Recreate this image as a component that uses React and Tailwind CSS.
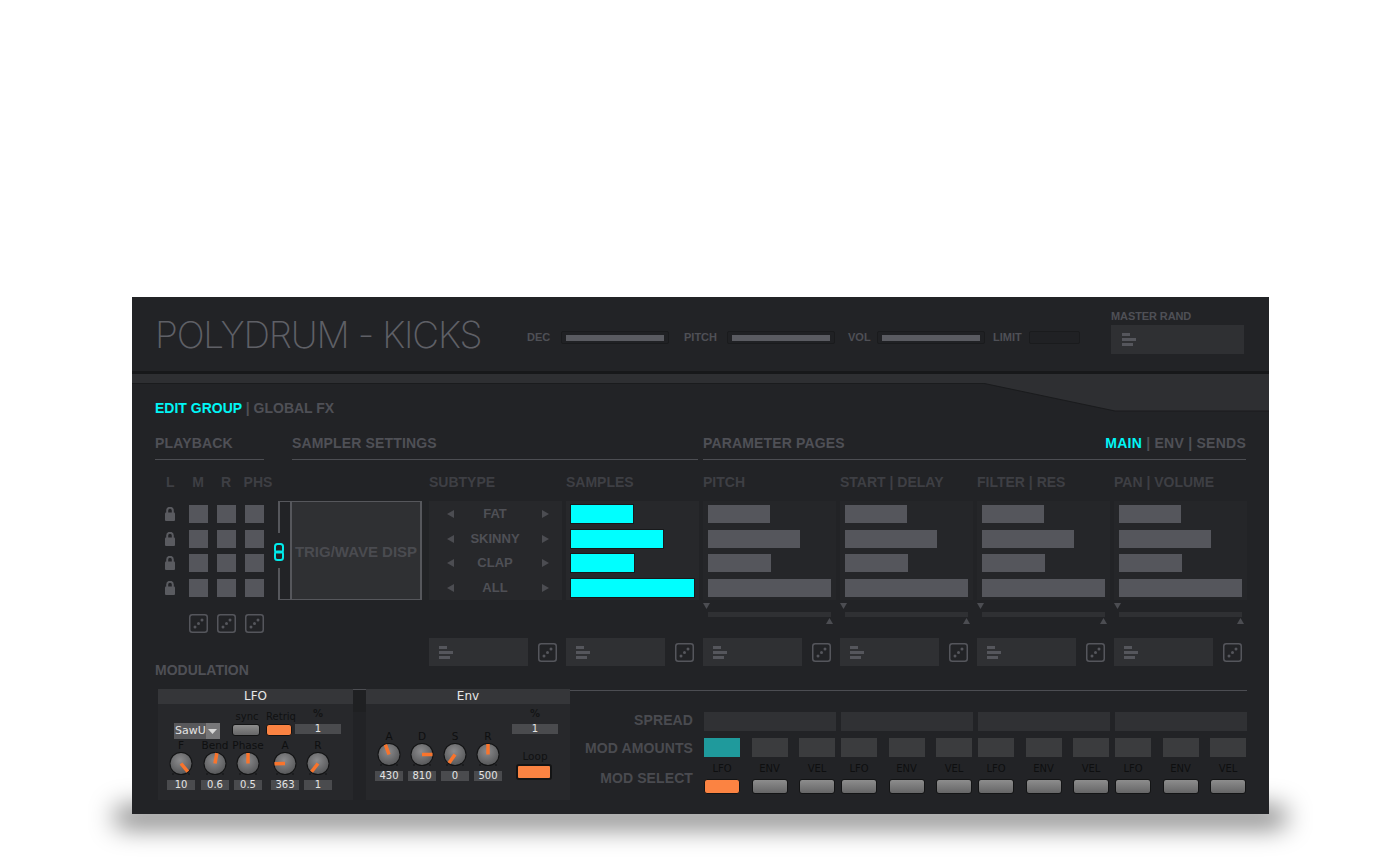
import React from "react";

const bold = "font-['Liberation_Sans',sans-serif] font-bold";
const small = "font-['DejaVu_Sans',sans-serif]";

const Tri = ({ dir, className }) => {
  const pts = {
    up: "3.5,0 7,6 0,6",
    down: "0,0 7,0 3.5,6",
    left: "7,0 7,8 0,4",
    right: "0,0 7,4 0,8",
  };
  const horizontal = dir === "left" || dir === "right";
  return (
    <svg
      width="7"
      height={horizontal ? 8 : 6}
      className={"block shrink-0 " + (className || "")}
    >
      <polygon points={pts[dir]} fill="#4c4d52" />
    </svg>
  );
};

const Dice = ({ className }) => (
  <svg width="19" height="19" className={"block shrink-0 " + (className || "")}>
    <rect x="0.75" y="0.75" width="17.5" height="17.5" rx="2.5" fill="none" stroke="#55565c" strokeWidth="1.5" />
    <circle cx="6" cy="13" r="1.5" fill="#55565c" />
    <circle cx="9.5" cy="9.5" r="1.5" fill="#55565c" />
    <circle cx="13" cy="6" r="1.5" fill="#55565c" />
  </svg>
);

const Rand = ({ className }) => (
  <div className={"flex flex-col gap-[2px] " + (className || "")}>
    <div className="h-[3px] w-[8px] bg-[#55565c]" />
    <div className="h-[3px] w-[14px] bg-[#55565c]" />
    <div className="h-[3px] w-[11px] bg-[#55565c]" />
  </div>
);

const RandRow = () => (
  <div className="flex items-center">
    <div className="flex h-[28px] w-[99px] items-center bg-[#2f3033] pl-[10px]">
      <Rand />
    </div>
    <Dice className="ml-[10px]" />
  </div>
);

const Lock = () => (
  <svg width="10" height="14" className="block">
    <path d="M2.2 6V3.6a2.8 2.8 0 0 1 5.6 0V6" fill="none" stroke="#5a5b60" strokeWidth="2" />
    <rect x="0" y="5.5" width="10" height="8.5" rx="1" fill="#5a5b60" />
  </svg>
);

const Link = () => (
  <svg width="10" height="18" className="block">
    <rect x="1" y="1" width="8" height="8.5" rx="2.5" fill="none" stroke="#00ecec" strokeWidth="2" />
    <rect x="1" y="8.5" width="8" height="8.5" rx="2.5" fill="none" stroke="#00ecec" strokeWidth="2" />
  </svg>
);

const Slot = ({ w, fill = true }) => (
  <div className={"flex h-[13px] items-center rounded-[2px] border border-[#1a1b1d] bg-[#202124] px-[4px] " + w}>
    {fill && <div className="h-[6px] w-full bg-[#5a5b61]" />}
  </div>
);

const Col = ({ label, children }) => (
  <div className="w-[133px] shrink-0">
    <div className={bold + " h-[41px] pt-[14px] text-[14px] leading-[16px] text-[#3e3f44]"}>{label}</div>
    {children}
  </div>
);

const ParamCol = ({ label, widths, cyan }) => (
  <Col label={label}>
    <div className={"flex h-[99px] flex-col gap-[6.6px] pl-[5px] pt-[4px] " + (cyan ? "bg-[#27282b]" : "bg-[#252629]")}>
      {widths.map((w, i) => (
        <div
          key={i}
          className={"h-[18px] " + (cyan ? "bg-[#00ffff] outline outline-1 outline-[#18191b]" : "bg-[#55565c]")}
          style={{ width: w }}
        />
      ))}
    </div>
    <div className="h-[38px]">
      {!cyan && (
        <>
          <Tri dir="down" className="translate-y-[3px]" />
          <div className="ml-[5px] mt-[6px] h-[5px] w-[123px] bg-[#2f3033]" />
          <Tri dir="up" className="ml-[123px] mt-[1px]" />
        </>
      )}
    </div>
    <RandRow />
  </Col>
);

const Knob = ({ id, angle }) => (
  <svg width="28" height="26" className="block">
    <defs>
      <radialGradient id={id} cx="45%" cy="35%" r="70%">
        <stop offset="0%" stopColor="#8b8b8d" />
        <stop offset="100%" stopColor="#545557" />
      </radialGradient>
    </defs>
    <circle cx="6" cy="23" r="0.8" fill="#111" />
    <circle cx="22" cy="23" r="0.8" fill="#111" />
    <circle cx="14" cy="12.5" r="11.5" fill="#121314" />
    <circle cx="14" cy="12.5" r="10.5" fill={`url(#${id})`} />
    <line
      x1="14"
      y1="12.5"
      x2="14"
      y2="2"
      stroke="#f9742c"
      strokeWidth="3.5"
      transform={`rotate(${angle} 14 12.5)`}
    />
  </svg>
);

const KnobCol = ({ id, label, value, angle, className }) => (
  <div className={"flex w-[28px] flex-col items-center " + (className || "")}>
    <div className={small + " h-[12px] whitespace-nowrap text-[10.5px] leading-[12px] text-[#0e0f10]"}>{label}</div>
    <Knob id={id} angle={angle} />
    <div className={small + " mt-[3px] h-[10px] w-[28px] bg-[#4a4b4e] text-center text-[10px] leading-[10px] text-[#e4e4e4]"}>
      {value}
    </div>
  </div>
);

const PercentCol = ({ className }) => (
  <div className={"w-[46px] " + (className || "")}>
    <div className={small + " h-[18px] text-center text-[10px] font-bold leading-[16px] text-[#141516]"}>%</div>
    <div className={small + " h-[10px] bg-[#4a4b4e] text-center text-[10px] leading-[10px] text-[#e4e4e4]"}>1</div>
  </div>
);

const Btn = ({ on, className }) => (
  <div
    className={
      "rounded-[3px] border border-[#131415] " +
      (on ? "bg-[#fb8342] " : "bg-gradient-to-b from-[#8d8d8d] to-[#666667] ") +
      (className || "")
    }
  />
);

const PanelHead = ({ children }) => (
  <div className={small + " h-[15px] bg-[#353639] text-center text-[12px] leading-[15px] text-[#e8e8e8]"}>{children}</div>
);

const Lfo = () => (
  <div className="w-[195px] shrink-0">
    <PanelHead>LFO</PanelHead>
    <div className="h-[96px] bg-[#27282b]">
      <div className="flex h-[35px] items-start">
        <div className="ml-[16px] mt-[19px] flex h-[16px] w-[46px] bg-[#58585b]">
          <span className={small + " flex-1 pl-[1px] text-[11px] leading-[16px] text-[#e4e4e4]"}>SawU</span>
          <div className="flex w-[15px] items-center justify-center bg-[#777779]">
            <svg width="9" height="5"><polygon points="0,0 9,0 4.5,5" fill="#d8d8d8" /></svg>
          </div>
        </div>
        <div className="ml-[12px] mt-[6px] w-[30px]">
          <div className={small + " h-[14px] text-center text-[10px] leading-[14px] text-[#101112]"}>sync</div>
          <Btn className="h-[12px] w-[28px]" />
        </div>
        <div className="ml-[4px] mt-[6px] w-[30px]">
          <div className={small + " -mx-[2px] h-[14px] text-center text-[10px] leading-[14px] text-[#101112]"}>Retriq</div>
          <Btn on className="h-[12px] w-[26px]" />
        </div>
        <PercentCol className="-ml-px mt-[2px]" />
      </div>
      <div className="ml-[9px] flex">
        <KnobCol id="lf" label="F" value="10" angle={140} />
        <KnobCol id="lb" label="Bend" value="0.6" angle={10} className="ml-[6px]" />
        <KnobCol id="lp" label="Phase" value="0.5" angle={0} className="ml-[5px]" />
        <KnobCol id="la" label="A" value="363" angle={268} className="ml-[9px]" />
        <KnobCol id="lr" label="R" value="1" angle={218} className="ml-[5px]" />
      </div>
    </div>
  </div>
);

const Env = () => (
  <div className="w-[204px] shrink-0">
    <PanelHead>Env</PanelHead>
    <div className="flex h-[96px] bg-[#27282b]">
      <div className="ml-[9px] mt-[26px] flex h-fit gap-[5px]">
        <KnobCol id="ea" label="A" value="430" angle={-20} />
        <KnobCol id="ed" label="D" value="810" angle={90} />
        <KnobCol id="es" label="S" value="0" angle={215} />
        <KnobCol id="er" label="R" value="500" angle={0} />
      </div>
      <div className="ml-[10px] mt-[2px] w-[46px]">
        <PercentCol />
        <div className={small + " mt-[15px] h-[14px] text-center text-[10.5px] leading-[14px] text-[#101112]"}>Loop</div>
        <Btn on className="ml-[4px] mt-[1px] h-[16px] w-[36px] border-2" />
      </div>
    </div>
  </div>
);

const RowLabel = ({ children, className }) => (
  <div className={bold + " w-[123px] shrink-0 text-right text-[14px] tracking-[0.1px] text-[#4a4b50] whitespace-nowrap " + (className || "")}>{children}</div>
);

const groups = ["LFO", "ENV", "VEL"];

const ModRight = () => (
  <div className="mt-[1px] h-[110px] w-[677px] shrink-0 border-t border-[#4c4d52] pt-[21px]">
    <div className="flex">
      <RowLabel className="h-[19px] leading-[17px]">SPREAD</RowLabel>
      <div className="ml-[11px] flex gap-[5px]">
        {[0, 1, 2, 3].map((i) => (
          <div key={i} className="h-[19px] w-[132px] bg-[#303134]" />
        ))}
      </div>
    </div>
    <div className="mt-[7px] flex">
      <RowLabel className="h-[19px] leading-[21px]">MOD AMOUNTS</RowLabel>
      <div className="ml-[11px] flex gap-[6px]">
        {[0, 1, 2, 3].map((g) => (
          <div key={g} className="flex w-[131px] justify-between">
            {groups.map((n, i) => (
              <div
                key={n}
                className={"h-[19px] w-[36px] " + (g === 0 && i === 0 ? "bg-[#1f9a9c]" : "bg-[#3b3c3e]")}
              />
            ))}
          </div>
        ))}
      </div>
    </div>
    <div className="mt-[6px] flex">
      <div className="pt-[6px]">
        <RowLabel className="leading-[19px]">MOD SELECT</RowLabel>
      </div>
      <div className="ml-[11px] flex gap-[6px]">
        {[0, 1, 2, 3].map((g) => (
          <div key={g} className="flex w-[131px] justify-between">
            {groups.map((n, i) => (
              <div key={n} className="w-[36px]">
                <div className={small + " h-[16px] text-center text-[10px] leading-[12px] text-[#0e0f10]"}>{n}</div>
                <Btn on={g === 0 && i === 0} className="h-[15px] w-[36px]" />
              </div>
            ))}
          </div>
        ))}
      </div>
    </div>
  </div>
);

const Section = ({ className, children, right }) => (
  <div className={"flex h-[44px] items-end justify-between border-b border-[#4c4d52] pb-[8px] " + className}>
    <span className={bold + " text-[14px] leading-[16px] tracking-[0.15px] text-[#4f5056]"}>{children}</span>
    {right}
  </div>
);

export default function App() {
  return (
    <div className="isolate min-h-[857px] overflow-hidden bg-white pl-[132px] pt-[297px]">
      <div className="relative h-[517px] w-[1137px] bg-[#222326]">
        {/* soft shadow under the plugin */}
        <div className="absolute -left-[18px] -right-[18px] -bottom-[13px] -z-10 h-[20px] rounded-[20px] bg-black/55 blur-[13px]" />

        {/* title bar */}
        <div className="relative flex h-[74px] items-start pl-[23px]">
          <div className="mt-[15px] w-[372px] font-['Inter',sans-serif] text-[37px] font-extralight leading-[46px] tracking-[-1.2px] text-[#5f6066] whitespace-nowrap">
            POLYDRUM - KICKS
          </div>
          <div className={bold + " mt-[34px] flex items-center text-[11px] leading-[13px] text-[#4f5056]"}>
            <span className="w-[34px]">DEC</span>
            <Slot w="w-[108px]" />
            <span className="ml-[15px] w-[43px]">PITCH</span>
            <Slot w="w-[108px]" />
            <span className="ml-[13px] w-[29px]">VOL</span>
            <Slot w="w-[108px]" />
            <span className="ml-[8px] w-[36px]">LIMIT</span>
            <Slot w="w-[51px]" fill={false} />
          </div>
          <div className="ml-[31px] mt-[13px]">
            <div className={bold + " h-[15px] text-[11px] leading-[13px] tracking-[-0.1px] text-[#4f5056]"}>MASTER RAND</div>
            <div className="flex h-[29px] w-[133px] items-center bg-[#2f3033] pl-[11px]">
              <Rand />
            </div>
          </div>
        </div>

        {/* separator strip */}
        <div className="h-[3px] bg-[#17181a]" />
        <div className="h-[9px] bg-[#2e2f32]" />
        <div className="h-px bg-[#1a1b1d]" />
        <svg width="287" height="29" className="absolute left-[850px] top-[86px]">
          <polygon points="0,0 287,0 287,28 133,28" fill="#2e2f32" />
          <polyline points="0,0 133,28 287,28" fill="none" stroke="#1a1b1d" strokeWidth="1" />
        </svg>

        <div className="relative px-[23px]">
          {/* page tabs */}
          <div className={bold + " mt-[16px] h-[16px] text-[14px] leading-[16px] text-[#4f5056]"}>
            <span className="text-[#00f6f6]">EDIT GROUP</span> | GLOBAL FX
          </div>

          {/* section headings */}
          <div className="flex">
            <Section className="w-[109px]">PLAYBACK</Section>
            <Section className="ml-[28px] w-[406px]">SAMPLER SETTINGS</Section>
            <Section
              className="ml-[5px] w-[543px]"
              right={
                <span className={bold + " text-[14px] leading-[16px] tracking-[0.25px] text-[#4f5056]"}>
                  <span className="text-[#00f6f6]">MAIN</span> | ENV | SENDS
                </span>
              }
            >
              PARAMETER PAGES
            </Section>
          </div>

          {/* main controls */}
          <div className="flex">
            <div className="w-[274px] shrink-0">
              <div className={bold + " flex h-[41px] pt-[14px] text-[14px] leading-[16px] text-[#3e3f44]"}>
                <span className="ml-[11px] w-[22px]">L</span>
                <span className="w-[20px] text-center">M</span>
                <span className="ml-[8px] w-[20px] text-center">R</span>
                <span className="ml-[7px] w-[30px] text-center">PHS</span>
              </div>
              <div className="flex h-[99px]">
                <div className="flex w-[123px] flex-col gap-[6.6px] pt-[4px]">
                  {[0, 1, 2, 3].map((i) => (
                    <div key={i} className="flex h-[18px] items-center">
                      <div className="ml-[10px]">
                        <Lock />
                      </div>
                      <div className="ml-[14px] flex gap-[9px]">
                        <div className="h-[18px] w-[19px] bg-[#55565c]" />
                        <div className="h-[18px] w-[19px] bg-[#55565c]" />
                        <div className="h-[18px] w-[19px] bg-[#55565c]" />
                      </div>
                    </div>
                  ))}
                </div>
                <div className="relative flex w-[144px] border-y border-r-2 border-[#56575c]">
                  <div className="flex w-[12px] flex-col justify-between">
                    <div className="h-[31px] border-l-2 border-[#56575c]" />
                    <div className="h-[31px] border-l-2 border-[#56575c]" />
                  </div>
                  <div className={bold + " flex flex-1 items-center justify-center border-l-2 border-[#56575c] bg-[#2f3033] pt-[4px] text-[15px] text-[#4a4b50] whitespace-nowrap"}>
                    TRIG/WAVE DISP
                  </div>
                  <div className="absolute -left-[4px] top-[41px]">
                    <Link />
                  </div>
                </div>
              </div>
              <div className="ml-[34px] mt-[14px] flex gap-[9px]">
                <Dice />
                <Dice />
                <Dice />
              </div>
            </div>

            <div className="flex gap-[4px]">
              <Col label="SUBTYPE">
                <div className="flex h-[99px] flex-col gap-[6.6px] bg-[#27282b] pl-[18px] pr-[13px] pt-[4px]">
                  {["FAT", "SKINNY", "CLAP", "ALL"].map((t) => (
                    <div key={t} className="flex h-[18px] items-center justify-between">
                      <Tri dir="left" />
                      <span className={bold + " -translate-x-[3px] text-[13px] text-[#4f5056]"}>{t}</span>
                      <Tri dir="right" />
                    </div>
                  ))}
                </div>
                <div className="h-[38px]" />
                <RandRow />
              </Col>
              <ParamCol label="SAMPLES" widths={[62, 92, 63, 123]} cyan />
              <ParamCol label="PITCH" widths={[62, 92, 63, 123]} />
              <ParamCol label="START | DELAY" widths={[62, 92, 63, 123]} />
              <ParamCol label="FILTER | RES" widths={[62, 92, 63, 123]} />
              <ParamCol label="PAN | VOLUME" widths={[62, 92, 63, 123]} />
            </div>
          </div>

          {/* modulation */}
          <div className={bold + " h-[8px] text-[14px] leading-[8px] text-[#4f5056]"}>MODULATION</div>
          <div className="ml-[3px] mt-[15px] flex">
            <Lfo />
            <div className="h-[23px] w-[13px] shrink-0 border-t border-[#4c4d52] bg-[#1f2022]" />
            <Env />
            <ModRight />
          </div>
        </div>
      </div>
    </div>
  );
}
